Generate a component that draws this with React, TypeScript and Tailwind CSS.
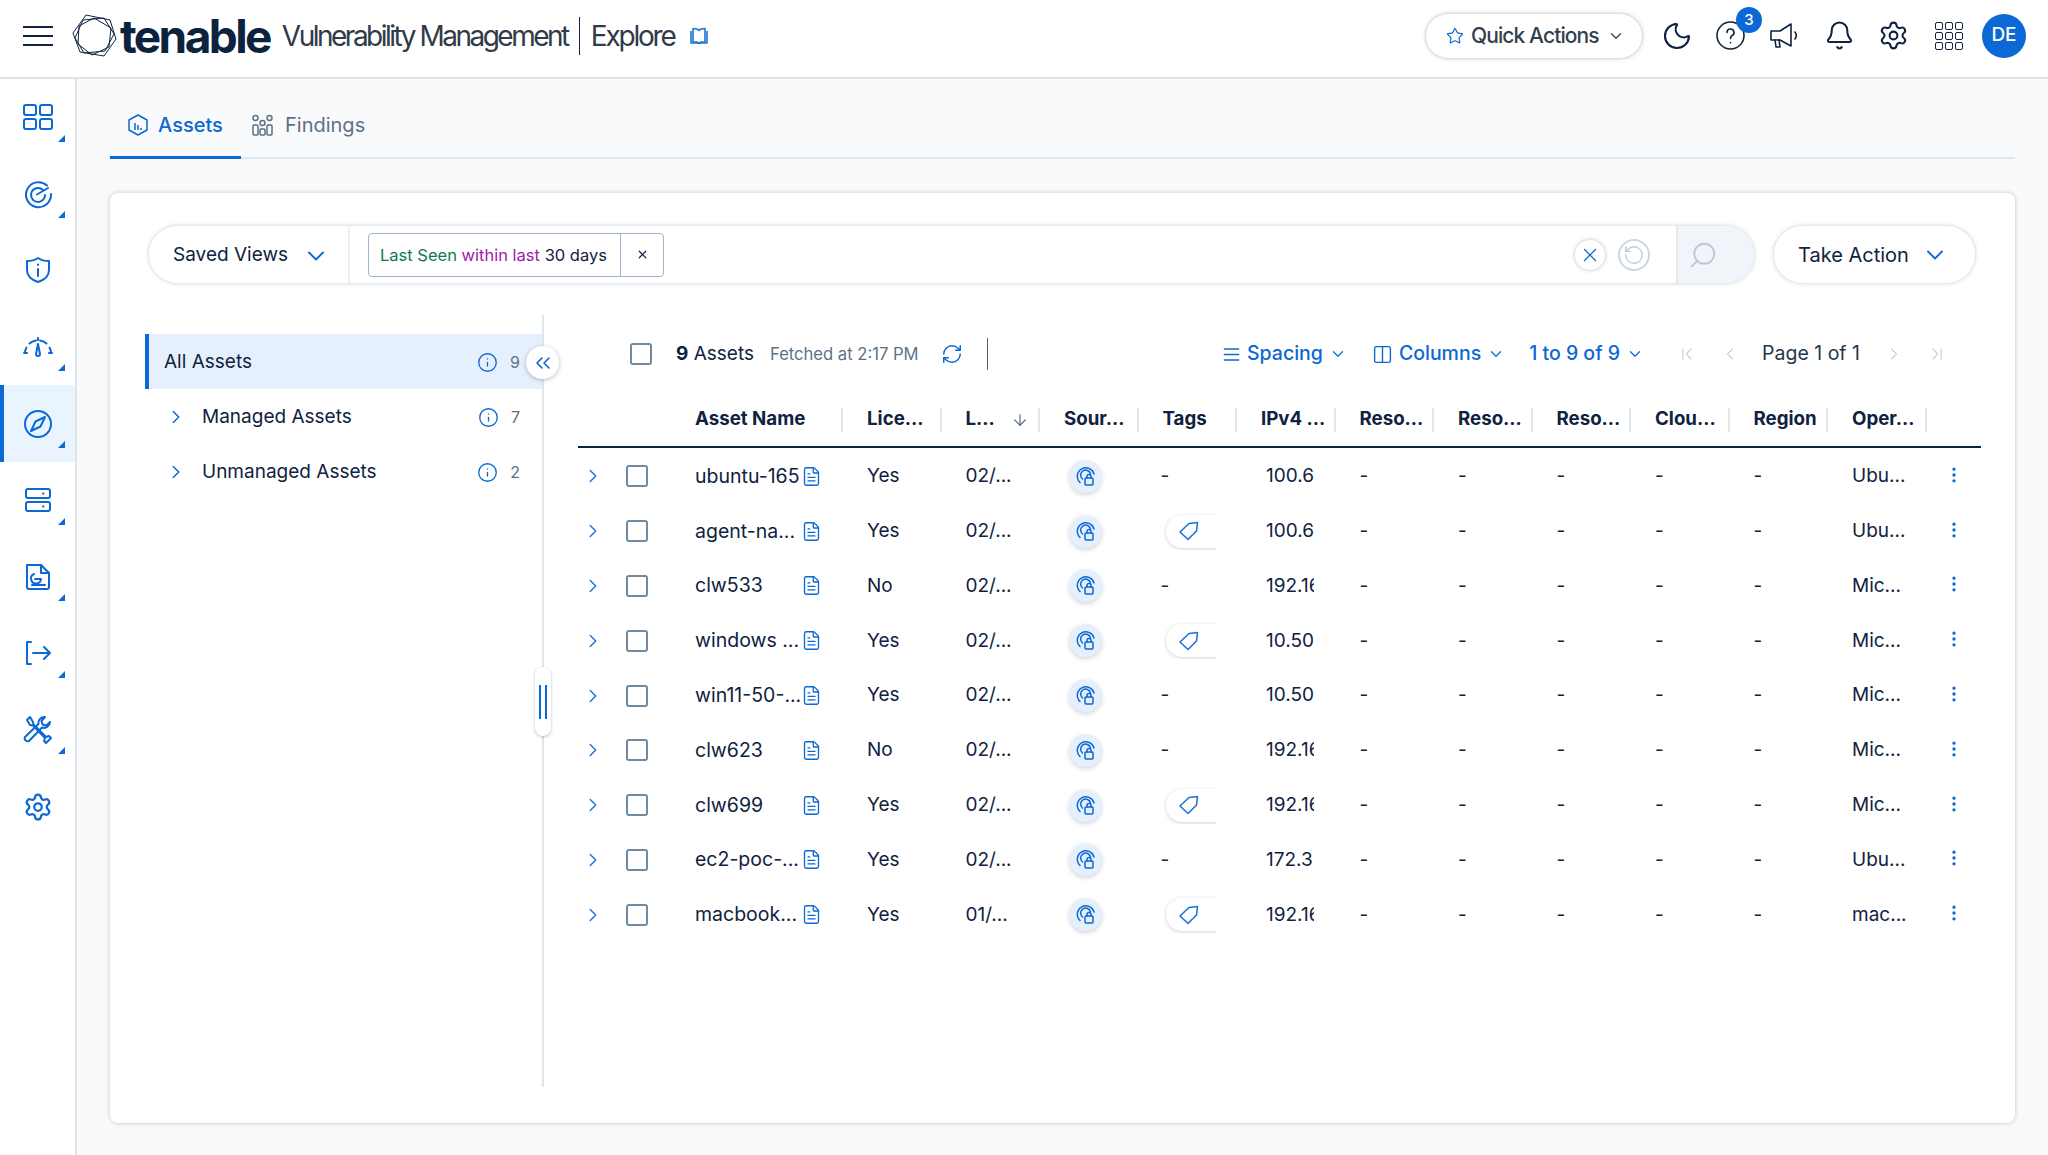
import type { ReactNode } from "react";
import {
  Bell,
  ChevronDown,
  ChevronFirst,
  ChevronLast,
  ChevronLeft,
  ChevronRight,
  ChevronsLeft,
  Columns2,
  EllipsisVertical,
  FileText,
  Info,
  Moon,
  RefreshCw,
  RotateCcw,
  Search,
  Settings,
  Star,
  X,
  ArrowDown,
  AlignJustify,
} from "lucide-react";

interface AssetRow {
  name: string;
  license: string;
  date: string;
  tag: boolean;
  ip: string;
  os: string;
}

const rows: AssetRow[] = [
  { name: "ubuntu-165", license: "Yes", date: "02/...", tag: false, ip: "100.6", os: "Ubu..." },
  { name: "agent-na...", license: "Yes", date: "02/...", tag: true, ip: "100.6", os: "Ubu..." },
  { name: "clw533", license: "No", date: "02/...", tag: false, ip: "192.168", os: "Mic..." },
  { name: "windows ...", license: "Yes", date: "02/...", tag: true, ip: "10.50", os: "Mic..." },
  { name: "win11-50-...", license: "Yes", date: "02/...", tag: false, ip: "10.50", os: "Mic..." },
  { name: "clw623", license: "No", date: "02/...", tag: false, ip: "192.168", os: "Mic..." },
  { name: "clw699", license: "Yes", date: "02/...", tag: true, ip: "192.168", os: "Mic..." },
  { name: "ec2-poc-...", license: "Yes", date: "02/...", tag: false, ip: "172.3", os: "Ubu..." },
  { name: "macbook...", license: "Yes", date: "01/...", tag: true, ip: "192.168", os: "mac..." },
];

const headers = ["Lice...", "L...", "Sour...", "Tags", "IPv4 ...", "Reso...", "Reso...", "Reso...", "Clou...", "Region", "Oper..."];

const gridCols = "grid-cols-[94px_171px_repeat(11,98.5px)_54px]";

function Svg({ children, size = 30 }: { children: ReactNode; size?: number }) {
  return (
    <svg width={size} height={size} viewBox="0 0 30 30" fill="none" stroke="currentColor" strokeWidth="2" strokeLinecap="round" strokeLinejoin="round">
      {children}
    </svg>
  );
}

const sideIcons: { icon: ReactNode; corner: boolean; active?: boolean }[] = [
  {
    corner: true,
    icon: (
      <Svg>
        <rect x="1" y="3" width="12" height="10" rx="2" />
        <rect x="17" y="3" width="12" height="10" rx="2" />
        <rect x="1" y="17" width="12" height="10" rx="2" />
        <rect x="17" y="17" width="12" height="10" rx="2" />
      </Svg>
    ),
  },
  {
    corner: true,
    icon: (
      <Svg>
        <path d="M24 6.500A12.500 12.500 0 1 0 28 15" />
        <path d="M20 11A7 7 0 1 0 22 16" />
        <path d="M14 15.500 25 9" />
      </Svg>
    ),
  },
  {
    corner: false,
    icon: (
      <Svg>
        <path d="M15 3c3 2 7 3 11 3v9c0 6-5 10-11 12C9 25 4 21 4 15V6c4 0 8-1 11-3Z" />
        <path d="M15 14v7M15 9.500v.5" />
      </Svg>
    ),
  },
  {
    corner: true,
    icon: (
      <Svg>
        <path d="M2 21c0-2 .5-4 1.500-5.500M6.500 11.500C8 10 10 9 13 8.500M17 8.500c3 .5 5 1.500 6.500 3M26.500 15.500c1 1.500 1.500 3.500 1.500 5.500" />
        <path d="M15 12l2 10a2 2 0 0 1-4 0l2-10Z" />
        <path d="M1 21h3M26 21h3M15 6v2" />
      </Svg>
    ),
  },
  {
    corner: true,
    active: true,
    icon: (
      <Svg>
        <circle cx="15" cy="15" r="13" />
        <path d="M22 8 17.500 17.500 8 22l4.500-9.500L22 8Z" />
      </Svg>
    ),
  },
  {
    corner: true,
    icon: (
      <Svg>
        <rect x="3" y="4" width="24" height="9" rx="2" />
        <rect x="3" y="17" width="24" height="9" rx="2" />
        <path d="M20 8.500h.5M20 21.500h.5" />
      </Svg>
    ),
  },
  {
    corner: true,
    icon: (
      <Svg>
        <path d="M4 3h14l8 8v14a2 2 0 0 1-2 2H6a2 2 0 0 1-2-2V3Z" />
        <path d="M18 3v8h8" />
        <path d="M11 12a5 5 0 1 0 7 5h-6" />
        <path d="M9 23h13" />
      </Svg>
    ),
  },
  {
    corner: true,
    icon: (
      <Svg>
        <path d="M8 4H4v22h4" />
        <path d="M10 15h17M21 9l6 6-6 6" />
      </Svg>
    ),
  },
  {
    corner: true,
    icon: (
      <Svg>
        <path d="M7 2 4 5l3 5 3 .5L22 23l-1 3 2 2 5-5-2-2-3 1L10.500 9.500 10 7 7 2Z" />
        <path d="M27 7a6 6 0 0 1-8 5.500L6 26a3 3 0 0 1-4-4L15.500 9A6 6 0 0 1 22 2l-3.500 4 1 3.500 4 1L27 7Z" />
      </Svg>
    ),
  },
  { corner: false, icon: <Settings size={30} strokeWidth={1.8} /> },
];

function SourceBadge() {
  return (
    <div className="flex h-[33px] w-[33px] items-center justify-center rounded-full bg-[#e6f0fc] text-[#0b68d4] shadow-[0_2px_4px_rgba(15,34,64,0.18)]">
      <svg width="21" height="21" viewBox="0 0 21 21" fill="none" stroke="currentColor" strokeWidth="1.5" strokeLinecap="round" strokeLinejoin="round">
        <path d="M5 16.500A8.500 8.500 0 1 1 19 8" />
        <path d="M7.500 13a5 5 0 1 1 8-5" />
        <rect x="10" y="12" width="8" height="7" rx="1" />
        <path d="M12 12v-1.500a2 2 0 0 1 4 0V12" />
      </svg>
    </div>
  );
}

function TagPill() {
  return (
    <div className="h-[37px] w-[52px] overflow-hidden py-[2px] pl-[2px]">
      <div className="flex h-[33px] w-[80px] items-center rounded-full pl-[12px] text-[#1f74d8] shadow-[0_1px_4px_rgba(15,34,64,0.2)]">
        <svg width="22" height="22" viewBox="0 0 22 22" fill="none" stroke="currentColor" strokeWidth="1.6" strokeLinejoin="round">
          <path d="M2 12 11 3.500 19.500 2.500 18.500 11 10 19.500 2 12Z" />
        </svg>
      </div>
    </div>
  );
}

function Checkbox() {
  return <div className="h-[22px] w-[22px] rounded-[3px] border-[2.5px] border-[#6f8aa3] bg-white" />;
}

function Header() {
  return (
    <header className="flex h-[79px] items-center justify-between border-b-2 border-[#dfe3ea] bg-white pb-[6px] pl-[23px] pr-[22px] text-[#0f2240]">
      <div className="flex items-center">
        <div className="flex w-[30px] flex-col gap-[7px]">
          <span className="h-[2px] bg-[#0f2240]" />
          <span className="h-[2px] bg-[#0f2240]" />
          <span className="h-[2px] bg-[#0f2240]" />
        </div>
        <svg className="ml-[17px]" width="48" height="48" viewBox="0 0 48 48" fill="none" stroke="#0f2240" strokeWidth="1">
          <path d="M16 3 40 8 46 27 34 44 10 40 3 21 16 3Z" />
          <path d="M24 6 41 16 39 35 22 43 8 32 9 14 24 6Z" />
          <path d="M13 8 34 6 44 22 35 39 14 41 5 26 13 8Z" />
        </svg>
        <span className="ml-[2px] font-['Inter'] text-[46px] font-bold leading-none tracking-[-2.6px] text-[#0c2340]">tenable</span>
        <span className="ml-[12px] font-['Inter'] text-[28px] tracking-[-2.5px] text-[#2f3a4a]">Vulnerability Management</span>
        <span className="mx-[11px] h-[38px] w-px bg-[#0f2240]" />
        <span className="font-['Inter'] text-[28px] tracking-[-2.2px] text-[#2f3a4a]">Explore</span>
        <svg className="ml-[14px] text-[#1f74d8]" width="20" height="20" viewBox="0 0 20 20" fill="none" stroke="currentColor" strokeWidth="1.6" strokeLinejoin="round">
          <path d="M4 2.500c2.500 0 5 .5 6 2 1-1.500 3.500-2 6-2V16h-4l-2 1.500L8 16H4V2.500Z" />
          <path d="M2 5v12h16V5" />
        </svg>
      </div>
      <div className="flex items-center">
        <button className="flex h-[44px] w-[216px] items-center rounded-full bg-white pl-[20px] font-['Inter'] text-[21px] font-medium tracking-[-0.9px] text-[#333f4e] shadow-[0_0_4px_rgba(15,34,64,0.35)]">
          <Star size={18} className="mr-[7px] text-[#0b68d4]" strokeWidth={1.6} />
          Quick Actions
          <ChevronDown size={18} className="ml-[8px]" strokeWidth={1.6} />
        </button>
        <Moon size={32} strokeWidth={1.6} className="ml-[19px] mr-[22px]" />
        <div className="relative mr-[23px]">
          <svg width="31" height="31" viewBox="0 0 31 31" fill="none" stroke="currentColor" strokeWidth="1.6" strokeLinecap="round">
            <circle cx="15.500" cy="15.500" r="13.500" />
            <path d="M12 12.500a3.500 3.500 0 1 1 5 3.200c-1 .6-1.500 1.300-1.500 2.800M15.500 22.500v.2" />
          </svg>
          <span className="absolute -right-[16px] -top-[13px] flex h-[26px] w-[26px] items-center justify-center rounded-full bg-[#0b68d4] font-['Inter'] text-[15px] font-medium text-white">3</span>
        </div>
        <svg className="mr-[23px]" width="32" height="32" viewBox="0 0 32 32" fill="none" stroke="currentColor" strokeWidth="1.6" strokeLinejoin="round" strokeLinecap="round">
          <path d="M2 11h9l11-7v22l-11-6H2v-9Z" />
          <path d="M6 20l1 7h4l-1-7" />
          <path d="M26 12c1.500 2 1.500 5 0 7" />
        </svg>
        <Bell size={31} strokeWidth={1.6} className="mr-[23px]" />
        <Settings size={31} strokeWidth={1.6} className="mr-[26px]" />
        <div className="mr-[19px] grid grid-cols-3 gap-[2px]">
          {Array.from({ length: 9 }).map((_, i) => (
            <span key={i} className="h-[8px] w-[8px] rounded-[2px] border-[1.6px] border-[#0f2240]" />
          ))}
        </div>
        <div className="flex h-[44px] w-[44px] items-center justify-center rounded-full bg-[#0b68d4] font-['Inter'] text-[19px] font-medium text-white">DE</div>
      </div>
    </header>
  );
}

function Sidebar() {
  return (
    <aside className="h-full w-[77px] shrink-0 border-r-2 border-[#dfe3ea] bg-white">
      {sideIcons.map((item, i) => (
        <div
          key={i}
          className={`relative flex h-[76.6px] items-center justify-center text-[#0b68d4] ${item.active ? "border-l-4 border-[#0b68d4] bg-[#eaf4fe] pr-1" : ""}`}
        >
          {item.icon}
          {item.corner && <span className="absolute bottom-[14px] right-[10px] h-0 w-0 border-b-[7px] border-l-[7px] border-b-[#0b68d4] border-l-transparent" />}
        </div>
      ))}
    </aside>
  );
}

function FilterBar() {
  return (
    <div className="ml-[4px] flex items-center gap-[20px]">
      <div className="flex h-[57px] w-[1605px] items-center rounded-full bg-white shadow-[0_0_4px_rgba(15,34,64,0.25)]">
        <div className="flex h-full w-[201px] items-center border-r-2 border-[#edf0f4] pl-[24px] pt-[2px] text-[19px] text-[#0f2240]">
          Saved Views
          <ChevronDown size={28} strokeWidth={1.6} className="ml-[14px] text-[#0b68d4]" />
        </div>
        <div className="ml-[18px] flex h-[44px] w-[296px] items-center rounded-[4px] border border-[#9db6ce] text-[16.5px]">
          <div className="flex-1 whitespace-nowrap pl-[11px] pt-[2px]">
            <span className="text-[#0f7a50]">Last Seen </span>
            <span className="text-[#a020a8]">within last </span>
            <span className="text-[#0f2240]">30 days</span>
          </div>
          <div className="flex h-full w-[43px] items-center justify-center border-l border-[#9db6ce] text-[#0f2240]">
            <X size={13} strokeWidth={2.2} />
          </div>
        </div>
        <div className="flex-1" />
        <div className="mr-[13px] flex h-[30px] w-[30px] items-center justify-center rounded-full bg-white text-[#0b68d4] shadow-[0_0_4px_rgba(15,34,64,0.3)]">
          <X size={22} strokeWidth={1.4} />
        </div>
        <div className="mr-[26px] flex h-[32px] w-[32px] items-center justify-center rounded-full border-2 border-[#c9d8e6] text-[#b7c9da]">
          <RotateCcw size={22} strokeWidth={1.4} />
        </div>
        <div className="flex h-full w-[78px] items-center rounded-r-full border-l-2 border-[#e6eaef] bg-[#f1f5f9] pl-[10px] text-[#b7c9da]">
          <Search size={30} strokeWidth={1.5} className="-scale-x-100" />
        </div>
      </div>
      <button className="flex h-[57px] w-[201px] items-center justify-between rounded-full bg-white pl-[24px] pr-[26px] pt-px text-[20px] text-[#0f2240] shadow-[0_0_4px_rgba(15,34,64,0.25)]">
        Take Action
        <ChevronDown size={28} strokeWidth={1.6} className="text-[#0b68d4]" />
      </button>
    </div>
  );
}

function TreePanel() {
  const children = [
    { label: "Managed Assets", count: 7 },
    { label: "Unmanaged Assets", count: 2 },
  ];
  return (
    <div className="relative h-[772px] w-[399px] shrink-0 border-r-2 border-[#dde5ee] pt-[19px]">
      <div className="flex h-[55px] items-center border-l-4 border-[#0b68d4] bg-[#e6f0fc] pl-[15px] pr-[22px] pt-px text-[#0f2240]">
        <span className="flex-1 text-[19px]">All Assets</span>
        <Info size={21} strokeWidth={1.5} className="text-[#0b68d4]" />
        <span className="ml-[12px] text-[16px] text-[#5c7186]">9</span>
      </div>
      {children.map((c) => (
        <div key={c.label} className="flex h-[55px] items-center pl-[20px] pr-[22px] pt-px text-[#0f2240]">
          <ChevronRight size={22} strokeWidth={1.6} className="text-[#0b68d4]" />
          <span className="ml-[15px] flex-1 text-[19px]">{c.label}</span>
          <Info size={21} strokeWidth={1.5} className="text-[#0b68d4]" />
          <span className="ml-[12px] text-[16px] text-[#5c7186]">{c.count}</span>
        </div>
      ))}
      <div className="absolute -right-[17px] top-[31px] flex h-[33px] w-[33px] items-center justify-center rounded-full bg-white text-[#0b68d4] shadow-[0_1px_4px_rgba(15,34,64,0.3)]">
        <ChevronsLeft size={24} strokeWidth={1.6} />
      </div>
      <div className="absolute -right-[9px] top-[352px] flex h-[69px] w-[16px] items-center justify-center gap-[4px] rounded-full bg-white shadow-[0_1px_3px_rgba(15,34,64,0.3)]">
        <span className="h-[34px] w-[2px] bg-[#0b68d4]" />
        <span className="h-[34px] w-[2px] bg-[#0b68d4]" />
      </div>
    </div>
  );
}

function Toolbar() {
  return (
    <div className="flex h-[78px] items-center pl-[52px] pr-[34px] text-[19px] text-[#0f2240]">
      <Checkbox />
      <span className="ml-[24px]">
        <span className="font-bold">9</span> Assets
      </span>
      <span className="ml-[16px] text-[16.6px] text-[#5c7186]">Fetched at 2:17 PM</span>
      <RefreshCw size={22} strokeWidth={1.6} className="ml-[22px] text-[#0b68d4]" />
      <span className="ml-[24px] h-[32px] w-px bg-[#4f6274]" />
      <div className="flex-1" />
      <div className="flex items-center text-[19.5px] font-medium text-[#0b68d4]">
        <AlignJustify size={19} strokeWidth={1.8} />
        <span className="ml-[6px]">Spacing</span>
        <ChevronDown size={18} strokeWidth={1.6} className="ml-[6px]" />
        <Columns2 size={21} strokeWidth={1.6} className="ml-[25px]" />
        <span className="ml-[6px]">Columns</span>
        <ChevronDown size={18} strokeWidth={1.6} className="ml-[6px]" />
        <span className="ml-[24px]">1 to 9 of 9</span>
        <ChevronDown size={18} strokeWidth={1.6} className="ml-[6px]" />
      </div>
      <ChevronFirst size={20} strokeWidth={1.4} className="ml-[33px] text-[#c3d2e0]" />
      <ChevronLeft size={20} strokeWidth={1.4} className="ml-[23px] text-[#c3d2e0]" />
      <span className="ml-[22px] whitespace-nowrap text-[19.5px] text-[#26384c]">Page 1 of 1</span>
      <ChevronRight size={20} strokeWidth={1.4} className="ml-[24px] text-[#c3d2e0]" />
      <ChevronLast size={20} strokeWidth={1.4} className="ml-[23px] text-[#c3d2e0]" />
    </div>
  );
}

function AssetTable() {
  return (
    <div className="text-[19px] text-[#0f2240]">
      <div className={`grid h-[55px] items-center border-b-2 border-[#0f2240] text-[18.7px] ${gridCols}`}>
        <div />
        <div className="flex h-[24px] items-center border-r-2 border-[#dde5ee] pl-[23px] font-bold">Asset Name</div>
        {headers.map((h, i) => (
          <div key={i} className="flex h-[24px] items-center justify-between whitespace-nowrap border-r-2 border-[#dde5ee] pl-[24px] pr-[9px] font-bold">
            {h}
            {h === "L..." && <ArrowDown size={18} strokeWidth={1.6} className="text-[#5c7186]" />}
          </div>
        ))}
        <div />
      </div>
      <div className="pt-px">
        {rows.map((r, idx) => (
          <div key={idx} className={`grid h-[54.8px] items-center ${gridCols}`}>
            <div className="flex items-center pl-[4px]">
              <ChevronRight size={22} strokeWidth={1.6} className="text-[#1f74d8]" />
              <div className="ml-[22px]">
                <Checkbox />
              </div>
            </div>
            <div className="flex items-center justify-between pl-[23px] pr-[21px]">
              <span className="whitespace-nowrap text-[19.5px]">{r.name}</span>
              <FileText size={21} strokeWidth={1.5} className="shrink-0 text-[#0b68d4]" />
            </div>
            <div className="pl-[24px]">{r.license}</div>
            <div className="pl-[24px]">{r.date}</div>
            <div className="pl-[29px]">
              <SourceBadge />
            </div>
            <div className="pl-[22px]">{r.tag ? <div className="ml-[3px]"><TagPill /></div> : "-"}</div>
            <div className="ml-[29px] w-[48px] overflow-hidden whitespace-nowrap">{r.ip}</div>
            {[0, 1, 2, 3, 4].map((c) => (
              <div key={c} className="pl-[24px]">-</div>
            ))}
            <div className="whitespace-nowrap pl-[24px]">{r.os}</div>
            <div className="flex justify-start pl-[17px]">
              <EllipsisVertical size={20} strokeWidth={2} className="-mt-[3px] text-[#0b68d4]" />
            </div>
          </div>
        ))}
      </div>
    </div>
  );
}

export default function App() {
  return (
    <div className="flex h-screen flex-col overflow-hidden font-['Inter',sans-serif]">
      <Header />
      <div className="flex min-h-0 flex-1">
        <Sidebar />
        <main className="min-w-0 flex-1 bg-[#f9fafb] pl-[33px] pr-[33px]">
          <nav className="flex h-[80px] items-end border-b-2 border-[#dfe6ef]">
            <div className="-mb-[2px] flex h-[70px] w-[131px] items-center justify-center gap-[10px] border-b-[3px] border-[#0b68d4] pt-[5px] text-[20px] font-medium text-[#0b68d4]">
              <svg width="20" height="22" viewBox="0 0 20 22" fill="none" stroke="currentColor" strokeWidth="1.5" strokeLinejoin="round">
                <path d="M10 1 19 6v10l-9 5-9-5V6l9-5Z" />
                <path d="M7 9v7M10 11v5M13 14v2" />
              </svg>
              Assets
            </div>
            <div className="ml-[11px] flex h-[70px] items-center gap-[12px] pt-[5px] text-[20px] text-[#5c7186]">
              <svg width="21" height="22" viewBox="0 0 21 22" fill="none" stroke="currentColor" strokeWidth="1.5">
                <rect x="1" y="11" width="5" height="10" rx="1" />
                <rect x="8" y="15" width="5" height="6" rx="1" />
                <rect x="15" y="11" width="5" height="10" rx="1" />
                <circle cx="3.500" cy="4" r="2.500" />
                <circle cx="10.500" cy="9" r="2.500" />
                <circle cx="17.500" cy="4" r="2.500" />
              </svg>
              Findings
            </div>
          </nav>
          <section className="mt-[34px] h-[930px] rounded-lg bg-white pl-[35px] pt-[33px] shadow-[0_0_4px_rgba(15,34,64,0.25)]">
            <FilterBar />
            <div className="mt-[32px] flex">
              <TreePanel />
              <div className="ml-[34px] w-[1403px] shrink-0">
                <Toolbar />
                <AssetTable />
              </div>
            </div>
          </section>
        </main>
      </div>
    </div>
  );
}
